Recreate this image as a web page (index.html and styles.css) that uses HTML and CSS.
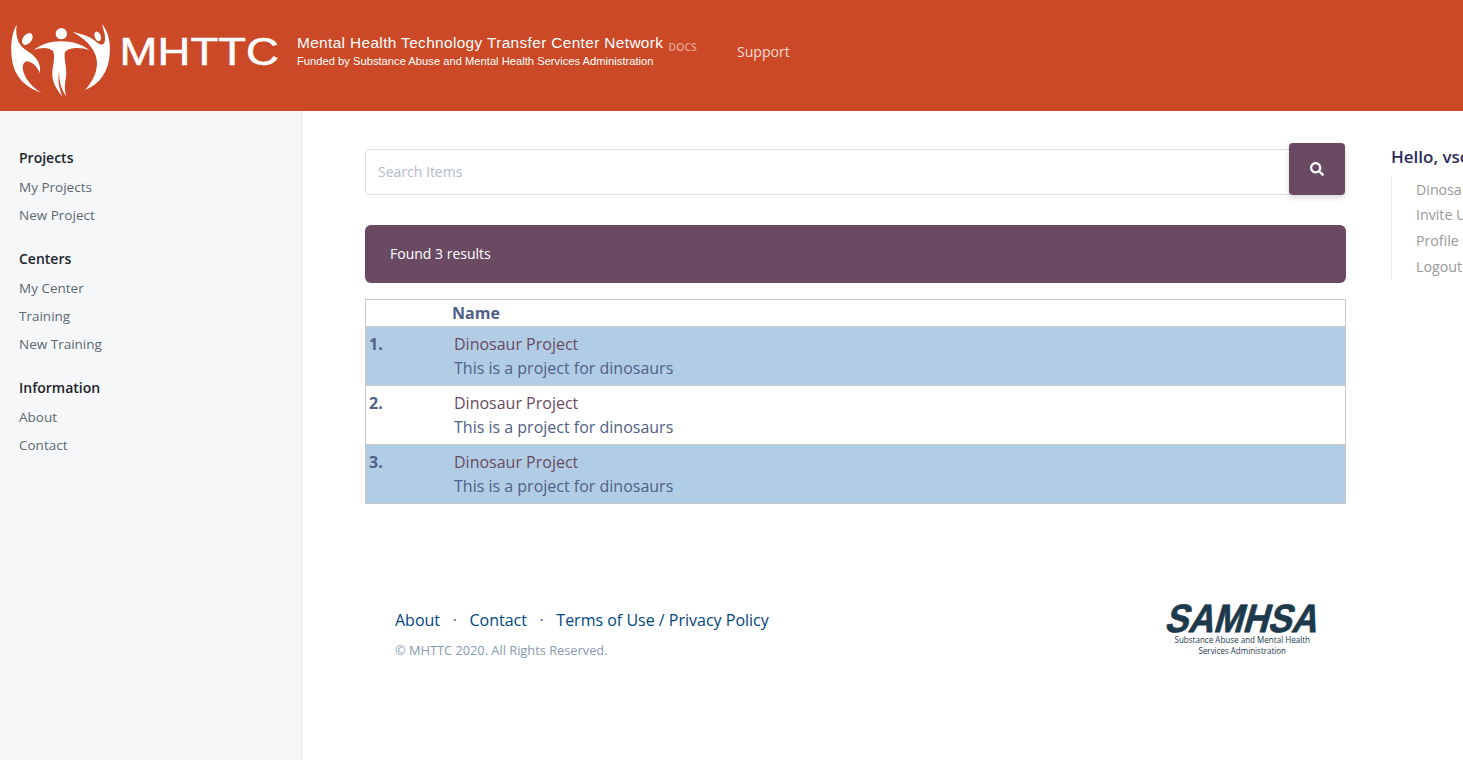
FILE: index.html
```html
<!DOCTYPE html>
<html lang="en">
<head>
<meta charset="utf-8">
<title>MHTTC Search</title>
<link rel="stylesheet" href="styles.css">
</head>
<body>
<header class="topbar">
  <svg class="brand" width="665" height="111" viewBox="0 0 665 111" role="img" aria-label="MHTTC">
    <g fill="#fff" transform="translate(0 10) scale(.33333)">
      <ellipse cx="82" cy="87" rx="13" ry="20" transform="rotate(38 82 87)"/>
      <circle cx="184" cy="71" r="17"/>
      <ellipse cx="293" cy="79" rx="9" ry="15" transform="rotate(-20 293 79)"/>
      <path d="M50 44C47 62 49 81 56 97C67 119 91 125 105 142C118 157 122 171 120 190C110 167 96 155 80 154C71 156 66 167 69 180C75 207 96 231 124 248C91 238 65 219 49 190C30 153 27 83 50 44Z"/>
      <path d="M101 120C124 104 149 94 184 94C218 94 246 103 268 120C243 110 205 112 195 126C190 146 202 173 198 200C194 222 193 240 198 258C185 240 176 214 178 186C172 208 177 237 188 260C168 236 155 214 157 185C160 161 166 137 159 124C147 110 121 112 101 120Z"/>
      <path d="M218 66C248 72 272 80 290 97C299 105 309 106 313 98C320 82 310 60 306 42C325 65 332 97 329 133C326 185 300 222 254 241C276 218 290 190 291 162C292 128 268 93 218 66Z"/>
    </g>
    <text class="logo-name" x="119.500" y="65" textLength="159.500" lengthAdjust="spacingAndGlyphs">MHTTC</text>
    <text class="logo-title" x="297" y="48" textLength="366" lengthAdjust="spacing">Mental Health Technology Transfer Center Network</text>
    <text class="logo-sub" x="297" y="65" textLength="356.500" lengthAdjust="spacing">Funded by Substance Abuse and Mental Health Services Administration</text>
  </svg>
  <span class="docs">DOCS</span>
  <a class="support">Support</a>
</header>
<div class="layout">
  <nav class="sidebar">
    <h6>Projects</h6>
    <ul><li>My Projects</li><li>New Project</li></ul>
    <h6>Centers</h6>
    <ul><li>My Center</li><li>Training</li><li>New Training</li></ul>
    <h6>Information</h6>
    <ul><li>About</li><li>Contact</li></ul>
  </nav>
  <main class="content">
    <form class="search">
      <input class="field" type="text" placeholder="Search Items">
      <button class="go" type="button" aria-label="Search">
        <svg width="14" height="14" viewBox="0 0 512 512"><path fill="#fff" d="M505 442.700L405.300 343c-4.500-4.500-10.600-7-17-7H372c27.600-35.300 44-79.700 44-128C416 93.100 322.900 0 208 0S0 93.100 0 208s93.100 208 208 208c48.300 0 92.700-16.400 128-44v16.300c0 6.400 2.500 12.500 7 17l99.700 99.700c9.400 9.400 24.600 9.400 33.900 0l28.300-28.300c9.400-9.400 9.400-24.600.1-34zM208 336c-70.700 0-128-57.200-128-128 0-70.700 57.200-128 128-128 70.700 0 128 57.200 128 128 0 70.700-57.200 128-128 128z"/></svg>
      </button>
    </form>
    <div class="alert">Found 3 results</div>
    <section class="results">
      <div class="head"><span></span><b>Name</b></div>
      <div class="row"><b>1.</b><div><a>Dinosaur Project</a><p>This is a project for dinosaurs</p></div></div>
      <div class="row"><b>2.</b><div><a>Dinosaur Project</a><p>This is a project for dinosaurs</p></div></div>
      <div class="row"><b>3.</b><div><a>Dinosaur Project</a><p>This is a project for dinosaurs</p></div></div>
    </section>
    <footer class="footer">
      <div>
        <div class="links"><a>About</a><i>·</i><a>Contact</a><i>·</i><a>Terms of Use / Privacy Policy</a></div>
        <div class="copy">© MHTTC 2020. All Rights Reserved.</div>
      </div>
      <svg class="samhsa" width="152" height="56" viewBox="0 0 152 56">
        <text class="samhsa-name" transform="translate(-2 28.500) skewX(-16)" x="0" y="0" textLength="152" lengthAdjust="spacingAndGlyphs">SAMHSA</text>
        <text class="samhsa-sub" x="8.500" y="40" textLength="135.500" lengthAdjust="spacingAndGlyphs">Substance Abuse and Mental Health</text>
        <text class="samhsa-sub" x="32.500" y="51" textLength="87.500" lengthAdjust="spacingAndGlyphs">Services Administration</text>
      </svg>
    </footer>
  </main>
  <aside class="account">
    <h5>Hello, vsoch</h5>
    <ul><li>Dinosaur</li><li>Invite Users</li><li>Profile</li><li>Logout</li></ul>
  </aside>
</div>
</body>
</html>
```
FILE: styles.css
```css
* { box-sizing: border-box; }
body { margin: 0; height: 760px; overflow: hidden; font: 16px/24px "Open Sans", sans-serif; color: #506086; background: #fff; }
h5, h6, p, ul { margin: 0; padding: 0; list-style: none; }
.topbar { height: 111px; display: flex; background: #cb4927; }
.brand { flex: none; display: block; }
.logo-name { font: 38px "Liberation Sans", sans-serif; fill: #fff; stroke: #fff; stroke-width: .5px; }
.logo-title { font: 15.4px "Liberation Sans", sans-serif; fill: #fff; }
.logo-sub { font: 11.2px "Liberation Sans", sans-serif; fill: #fff; }
.docs { margin: 37px 0 0 3.5px; width: 68.5px; font-size: 10.5px; line-height: 20px; font-weight: 600; color: #e5a493; }
.support { margin-top: 40px; font-size: 14.1px; color: #f5dbd4; }
.layout { display: grid; grid-template-columns: 302px 1044px 117px; height: 649px; }
.sidebar { background: #f5f7f9; border-right: 1px solid #e6e8ee; padding: 33px 19px; }
.sidebar h6 { height: 29px; font-size: 14px; line-height: 27px; font-weight: 600; color: #212529; }
.sidebar ul { margin-bottom: 16px; }
.sidebar li { font-size: 13.5px; line-height: 28px; color: #5d686f; }
.content { padding: 32px 0 0 63px; }
.search { display: flex; align-items: flex-end; height: 52px; }
.field { flex: 1; min-width: 0; height: 46px; padding: 0 12px 2px; border: 1px solid #dddfe6; border-radius: 4px 0 0 4px; font: 14px "Open Sans", sans-serif; outline: 0; }
.field::placeholder { color: #b3bcc6; opacity: 1; }
.go { width: 56px; height: 52px; margin: 0 1px 0 -1px; padding: 0; border: 0; border-radius: 4px; background: #6a4a62; display: flex; align-items: center; justify-content: center; box-shadow: 0 3px 6px rgba(0, 0, 0, .15); }
.alert { margin-top: 30px; height: 58px; padding: 0 25px; border-radius: 6px; background: #6a4a62; color: #fff; font-size: 14px; line-height: 58px; }
.results { margin-top: 16px; border: 1px solid #c8c8c8; }
.head { display: grid; grid-template-columns: 86px 1fr; height: 26px; line-height: 26px; }
.row { display: grid; grid-template-columns: 88px 1fr; height: 59px; padding-top: 5px; border-top: 1px solid #c8c8c8; }
.row b { padding-left: 3px; }
.row a { display: block; color: #6a4a62; }
.row:nth-child(even) { background: #b1cde5; }
.footer { display: flex; justify-content: space-between; padding: 99px 28px 0 30px; }
.links { display: flex; margin-top: 5px; color: #00467f; }
.links i { width: 29.4px; text-align: center; font-style: normal; color: #506690; }
.copy { margin-top: 6px; font-size: 12.8px; color: #869ab0; }
.samhsa { display: block; overflow: visible; }
.samhsa-name { font: bold 39.5px "Liberation Sans", sans-serif; fill: #1d3a4d; stroke: #1d3a4d; stroke-width: .8px; }
.samhsa-sub { font: 9.5px "Open Sans", sans-serif; fill: #1d3a4d; }
.account { padding: 33px 0 0 45px; white-space: nowrap; overflow: hidden; }
.account h5 { font-size: 17px; line-height: 26px; font-weight: 600; color: #2b2d5b; }
.account ul { height: 102px; margin-top: 7px; padding-left: 24px; border-left: 1px solid #ebebee; }
.account li { font-size: 14.2px; line-height: 26px; color: #999; }
.account li:first-child { line-height: 25px; }
.account li:nth-child(2) { line-height: 25px; margin-bottom: 1px; }
```
